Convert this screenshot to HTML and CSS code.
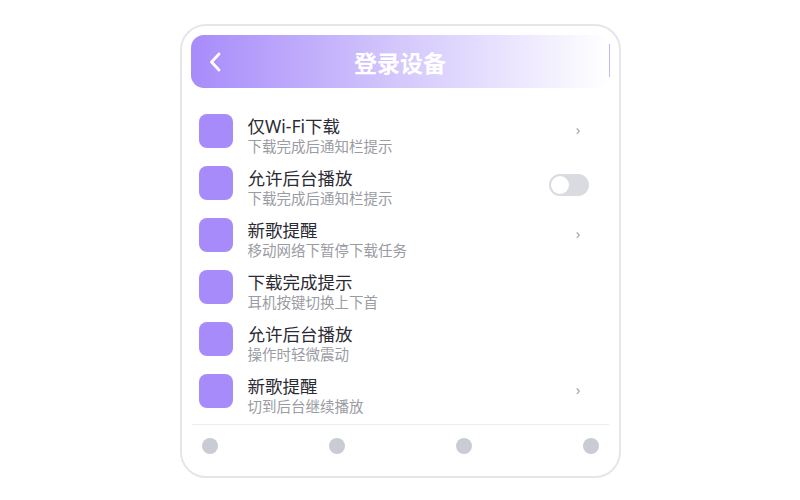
FILE: index.html
```html
<!DOCTYPE html>
<html lang="zh-CN">
<head>
    <meta charset="UTF-8">
    <meta name="viewport" content="width=device-width, initial-scale=1.0">
    <title>登录设备</title>
    <link rel="stylesheet" href="styles.css">
</head>
<body>
    <div class="phone">
        <!-- Шапка -->
        <div class="header">
            <svg class="back" width="14" height="22" viewBox="0 0 14 22">
                <path d="M11 3 L3.5 11 L11 19" fill="none" stroke="#fff" stroke-width="2.8" stroke-linecap="round" stroke-linejoin="round"/>
            </svg>
            <h1>登录设备</h1>
        </div>

        <!-- Список настроек -->
        <div class="list">
            <div class="row">
                <div class="icon"></div>
                <div class="text">
                    <div class="title">仅Wi-Fi下载</div>
                    <div class="sub">下载完成后通知栏提示</div>
                </div>
                <span class="arrow">›</span>
            </div>
            <div class="row">
                <div class="icon"></div>
                <div class="text">
                    <div class="title">允许后台播放</div>
                    <div class="sub">下载完成后通知栏提示</div>
                </div>
                <span class="switch"></span>
            </div>
            <div class="row">
                <div class="icon"></div>
                <div class="text">
                    <div class="title">新歌提醒</div>
                    <div class="sub">移动网络下暂停下载任务</div>
                </div>
                <span class="arrow">›</span>
            </div>
            <div class="row">
                <div class="icon"></div>
                <div class="text">
                    <div class="title">下载完成提示</div>
                    <div class="sub">耳机按键切换上下首</div>
                </div>
            </div>
            <div class="row">
                <div class="icon"></div>
                <div class="text">
                    <div class="title">允许后台播放</div>
                    <div class="sub">操作时轻微震动</div>
                </div>
            </div>
            <div class="row">
                <div class="icon"></div>
                <div class="text">
                    <div class="title">新歌提醒</div>
                    <div class="sub">切到后台继续播放</div>
                </div>
                <span class="arrow">›</span>
            </div>
        </div>

        <!-- Нижняя панель -->
        <div class="tabbar">
            <span class="dot"></span>
            <span class="dot"></span>
            <span class="dot"></span>
            <span class="dot"></span>
        </div>
    </div>
</body>
</html>
```

FILE: styles.css
```css
body {
    font-family: "Noto Sans", "Noto Sans CJK SC", sans-serif;
    margin: 0;
    background-color: #ffffff;
}

.phone {
    width: 419px;
    margin: 24px auto 0;
    border: 2px solid #e6e6ea;
    border-radius: 26px;
    padding: 9px 9px 22px;
}

.header {
    position: relative;
    height: 53px;
    border-radius: 13px;
    background: linear-gradient(90deg, #a78bfa 0%, #d4c8fc 50%, #ffffff 100%);
    display: flex;
    align-items: center;
    justify-content: center;
}

/* тонкая полоска справа */
.header::after {
    content: "";
    position: absolute;
    right: 0;
    top: 9px;
    width: 1px;
    height: 33px;
    background-color: #c7b5fc;
}

.header .back {
    position: absolute;
    left: 17px;
    top: 16px;
}

.header h1 {
    margin: 0;
    font-size: 23px;
    font-weight: 700;
    color: #ffffff;
}

.list {
    display: flex;
    flex-direction: column;
    gap: 12px;
    padding: 26px 20px 10px 7px;
    border-bottom: 1px solid #ebecf0;
    margin: 0 1px;
}

.row {
    display: flex;
    align-items: flex-start;
    height: 40px;
}

.icon {
    width: 34px;
    height: 34px;
    border-radius: 8px;
    background-color: #a78bfa;
    flex-shrink: 0;
}

.text {
    flex: 1;
    margin-left: 15px;
    padding-top: 1px;
}

.title {
    font-size: 17.5px;
    line-height: 22px;
    color: #2b2b33;
}

.sub {
    font-size: 14.5px;
    line-height: 18px;
    color: #9a9ca3;
}

.arrow {
    font-size: 15px;
    color: #a3a6ad;
    margin-top: 5px;
    margin-right: 8px;
}

.switch {
    position: relative;
    width: 40px;
    height: 22px;
    border-radius: 11px;
    background-color: #d9dbe1;
    margin-top: 8px;
}

.switch::before {
    content: "";
    position: absolute;
    left: 2px;
    top: 2px;
    width: 18px;
    height: 18px;
    border-radius: 50%;
    background-color: #ffffff;
}

.tabbar {
    display: flex;
    justify-content: space-between;
    padding: 13px 10px 0 11px;
}

.dot {
    width: 16px;
    height: 16px;
    border-radius: 50%;
    background-color: #c9ccd3;
}
```
